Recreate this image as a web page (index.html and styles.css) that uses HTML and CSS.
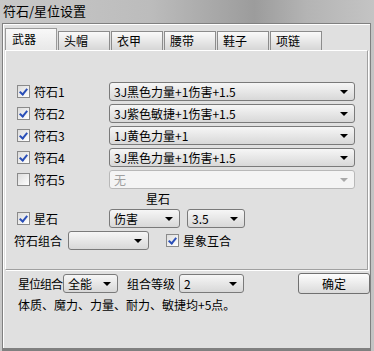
FILE: index.html
```html
<!DOCTYPE html>
<html lang="zh-CN">
<head>
    <meta charset="UTF-8">
    <title>符石/星位设置</title>
    <link rel="stylesheet" href="styles.css">
</head>
<body>
    <div class="title">符石/星位设置</div>
    <div class="frame">
        <div class="tabs">
            <div class="tab active">武器</div>
            <div class="tab">头帽</div>
            <div class="tab">衣甲</div>
            <div class="tab">腰带</div>
            <div class="tab">鞋子</div>
            <div class="tab">项链</div>
        </div>
        <div class="panel">
            <div class="row">
                <span class="check on"></span><span class="lbl">符石1</span>
                <div class="combo wide">3J黑色力量+1伤害+1.5</div>
            </div>
            <div class="row">
                <span class="check on"></span><span class="lbl">符石2</span>
                <div class="combo wide">3J紫色敏捷+1伤害+1.5</div>
            </div>
            <div class="row">
                <span class="check on"></span><span class="lbl">符石3</span>
                <div class="combo wide">1J黄色力量+1</div>
            </div>
            <div class="row">
                <span class="check on"></span><span class="lbl">符石4</span>
                <div class="combo wide">3J黑色力量+1伤害+1.5</div>
            </div>
            <div class="row">
                <span class="check"></span><span class="lbl">符石5</span>
                <div class="combo wide disabled">无</div>
            </div>
            <div class="heading">星石</div>
            <div class="row">
                <span class="check on"></span><span class="lbl">星石</span>
                <div class="combo w70">伤害</div>
                <div class="combo w57">3.5</div>
            </div>
            <div class="row combo-row">
                <span class="lbl2">符石组合</span>
                <div class="combo w80"></div>
                <span class="check on"></span><span class="lbl3">星象互合</span>
            </div>
        </div>
        <div class="footer">
            <div class="frow">
                <span class="flbl">星位组合</span>
                <div class="combo w54">全能</div>
                <span class="gap">组合等级</span>
                <div class="combo w64">2</div>
                <div class="button">确定</div>
            </div>
            <div class="note">体质、魔力、力量、耐力、敏捷均+5点。</div>
        </div>
    </div>
</body>
</html>
```

FILE: styles.css
```css
body {
    margin: 0;
    width: 374px;
    height: 351px;
    overflow: hidden;
    font-family: "Noto Sans CJK SC", sans-serif;
    font-size: 12px;
    color: #000;
    background: linear-gradient(90deg, #c8c8c8 0%, #bcbcbc 40%, #9c9c9c 68%, #b4b4b4 82%, #c4c4c4 100%);
}
.title {
    height: 23px;
    line-height: 21px;
    padding-left: 3px;
    font-size: 13px;
}
.frame {
    margin: 0 3px 0 2px;
    height: 320px;
    background: #e0e0e0;
    border: 1px solid #808080;
    border-bottom: 3px solid #808080;
    box-shadow: inset 1px 1px 0 #fff;
    padding: 4px 2px 0 2px;
}
.tabs {
    display: flex;
    height: 22px;
    align-items: flex-end;
}
.tab {
    width: 45px;
    height: 18px;
    line-height: 18px;
    padding-left: 5px;
    border: 1px solid #8c8c8c;
    border-bottom: none;
    background: linear-gradient(#fafafa, #d6d6d6);
    margin-right: 1px;
}
.tab.active {
    width: 44px;
    height: 21px;
    line-height: 19px;
    padding-left: 6px;
    background: linear-gradient(#f8f8f8, #e8e8e8);
    border-color: #9a9a9a;
}
.panel {
    height: 187px;
    border: 1px solid #a0a0a0;
    border-top-color: #fff;
    border-left-color: #fff;
    box-shadow: 1px 1px 0 #fff;
    padding-top: 31px;
}
.row {
    display: flex;
    align-items: center;
    height: 19px;
    margin-bottom: 3px;
    padding-left: 11px;
}
.check {
    width: 11px;
    height: 11px;
    border: 1px solid #8a8a8a;
    background: linear-gradient(135deg, #dcdcdc, #fff);
    position: relative;
    flex: none;
}
.check.on::after {
    content: "";
    position: absolute;
    left: 3px;
    top: 1px;
    width: 3px;
    height: 6px;
    border: solid #2a4fb8;
    border-width: 0 2px 2px 0;
    transform: rotate(40deg);
}
.lbl {
    width: 75px;
    padding-left: 4px;
}
.combo {
    position: relative;
    flex: none;
    height: 17px;
    line-height: 17px;
    padding-left: 4px;
    border: 1px solid #7a7a7a;
    border-radius: 3px;
    background: linear-gradient(#f6f6f6, #d8d8d8);
    white-space: nowrap;
}
.combo::after {
    content: "";
    position: absolute;
    right: 6px;
    top: 7px;
    border-left: 4px solid transparent;
    border-right: 4px solid transparent;
    border-top: 4px solid #000;
}
.combo.disabled {
    color: #a0a0a0;
    background: #f4f4f4;
    border-color: #b8b8b8;
}
.combo.disabled::after {
    border-top-color: #a8a8a8;
}
.wide { width: 240px; }
.w70 { width: 65px; margin-right: 7px; }
.w57 { width: 52px; }
.w80 { width: 75px; margin-right: 17px; }
.w54 { width: 49px; }
.w64 { width: 59px; }
.heading {
    height: 17px;
    line-height: 14px;
    padding-left: 140px;
}
.combo-row {
    padding-left: 8px;
    margin-top: 3px;
}
.lbl2 {
    width: 54px;
}
.lbl3 {
    padding-left: 4px;
}
.footer {
    padding: 3px 0 0 13px;
}
.frow {
    display: flex;
    align-items: center;
    height: 21px;
    white-space: nowrap;
}
.flbl {
    flex: none;
    width: 45px;
    letter-spacing: -1px;
}
.gap {
    flex: none;
    margin: 0 4px 0 9px;
}
.button {
    flex: none;
    width: 70px;
    height: 19px;
    line-height: 19px;
    margin-left: 54px;
    text-align: center;
    border: 1px solid #707070;
    border-radius: 3px;
    background: linear-gradient(#fdfdfd, #dadada);
}
.note {
    margin-top: 3px;
    line-height: 15px;
}
```
